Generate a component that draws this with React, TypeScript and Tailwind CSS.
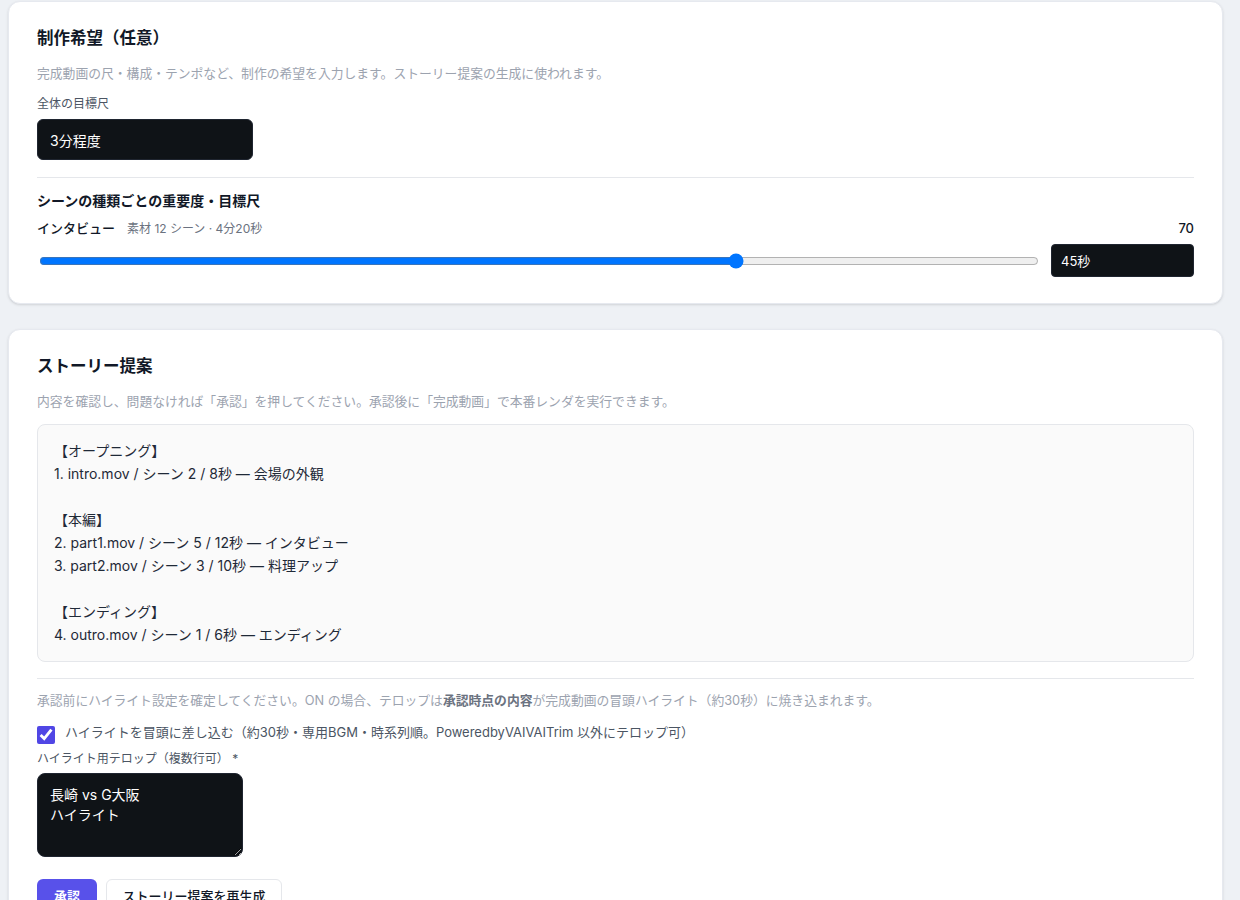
import { useState } from "react";

const story = `【オープニング】
1. intro.mov / シーン 2 / 8秒 — 会場の外観

【本編】
2. part1.mov / シーン 5 / 12秒 — インタビュー
3. part2.mov / シーン 3 / 10秒 — 料理アップ

【エンディング】
4. outro.mov / シーン 1 / 6秒 — エンディング`;

const App = () => {
  const [weight, setWeight] = useState(70);
  const [highlight, setHighlight] = useState(true);

  return (
    <div
      className="min-h-screen bg-[#eef1f5] pl-2 pr-[17px] pt-px pb-10"
      style={{ fontFamily: 'Inter, "Noto Sans CJK JP", sans-serif' }}
    >
      {/* 制作希望 */}
      <section className="bg-white border border-[#e6e9ef] rounded-xl shadow-sm px-7 pt-6 pb-[26px]">
        <h2 className="text-[16.5px] leading-6 font-bold text-[#111827]">制作希望（任意）</h2>
        <p className="mt-[15px] text-[12.8px] leading-[18px] text-[#9ca3af]">
          完成動画の尺・構成・テンポなど、制作の希望を入力します。ストーリー提案の生成に使われます。
        </p>
        <label className="block mt-[13px] text-xs leading-4 text-[#4b5563]">全体の目標尺</label>
        <input
          className="mt-[7px] block w-[216px] h-[41px] rounded-md bg-[#0f1317] border border-[#1f2530] px-3 text-sm text-white outline-none"
          defaultValue="3分程度"
        />
        <div className="mt-[17px] h-px bg-[#e5e7eb]" />
        <h3 className="mt-[13px] text-sm leading-5 font-semibold text-[#111827]">シーンの種類ごとの重要度・目標尺</h3>
        <div className="mt-[7px] flex items-center justify-between">
          <div className="flex items-baseline gap-3">
            <span className="text-[13px] leading-5 font-medium text-[#111827]">インタビュー</span>
            <span className="text-xs text-[#6b7280]">素材 12 シーン · 4分20秒</span>
          </div>
          <span className="text-[13px] leading-5 font-medium text-[#111827]">{weight}</span>
        </div>
        <div className="mt-[6px] flex items-center gap-3">
          <input
            type="range"
            min={0}
            max={100}
            value={weight}
            onChange={(e) => setWeight(Number(e.target.value))}
            className="flex-1 ml-[2px] accent-[#0075ff]"
          />
          <input
            className="w-[143px] h-[33px] rounded bg-[#0f1317] border border-[#1f2530] px-[9px] text-[13px] text-white outline-none"
            defaultValue="45秒"
          />
        </div>
      </section>

      {/* ストーリー提案 */}
      <section className="mt-[25px] bg-white border border-[#e6e9ef] rounded-xl shadow-sm px-7 pt-6 pb-8">
        <h2 className="text-[16.5px] leading-6 font-bold text-[#111827]">ストーリー提案</h2>
        <p className="mt-[15px] text-[12.8px] leading-[18px] text-[#9ca3af]">
          内容を確認し、問題なければ「承認」を押してください。承認後に「完成動画」で本番レンダを実行できます。
        </p>
        <div className="mt-[13px] rounded-lg border border-[#e5e7eb] bg-[#fafafa] px-4 pt-[14px] pb-[15px] text-sm leading-[23px] text-[#1f2937] whitespace-pre-wrap">
          {story}
        </div>
        <div className="mt-4 h-px bg-[#e5e7eb]" />
        <p className="mt-[13px] text-[12.8px] leading-[18px] text-[#9ca3af]">
          承認前にハイライト設定を確定してください。ON の場合、テロップは
          <b className="font-semibold text-[#6b7280]">承認時点の内容</b>
          が完成動画の冒頭ハイライト（約30秒）に焼き込まれます。
        </p>
        <label className="mt-[13px] flex items-center gap-[10px] h-6">
          <input
            type="checkbox"
            checked={highlight}
            onChange={(e) => setHighlight(e.target.checked)}
            className="w-[18px] h-[18px] accent-[#5046e5]"
          />
          <span className="text-[13px] text-[#4b5563] -mt-[4px]">
            ハイライトを冒頭に差し込む（約30秒・専用BGM・時系列順。PoweredbyVAIVAITrim 以外にテロップ可）
          </span>
        </label>
        <label className="block mt-1 text-xs leading-4 text-[#4b5563]">ハイライト用テロップ（複数行可） *</label>
        <textarea
          className="mt-[6px] block w-[206px] h-[84px] rounded-lg bg-[#0f1317] border border-[#1f2530] px-3 py-[11px] text-sm leading-5 text-white outline-none"
          defaultValue={"長崎 vs G大阪\nハイライト"}
        />
        <div className="mt-[22px] flex items-center gap-[9px]">
          <button className="h-9 w-[60px] rounded-md bg-[#5851ea] text-white text-[13px] font-semibold">承認</button>
          <button className="h-9 w-[176px] rounded-md border border-[#e5e7eb] bg-white text-[13px] font-medium text-[#111827]">
            ストーリー提案を再生成
          </button>
        </div>
      </section>
    </div>
  );
};

export default App;
